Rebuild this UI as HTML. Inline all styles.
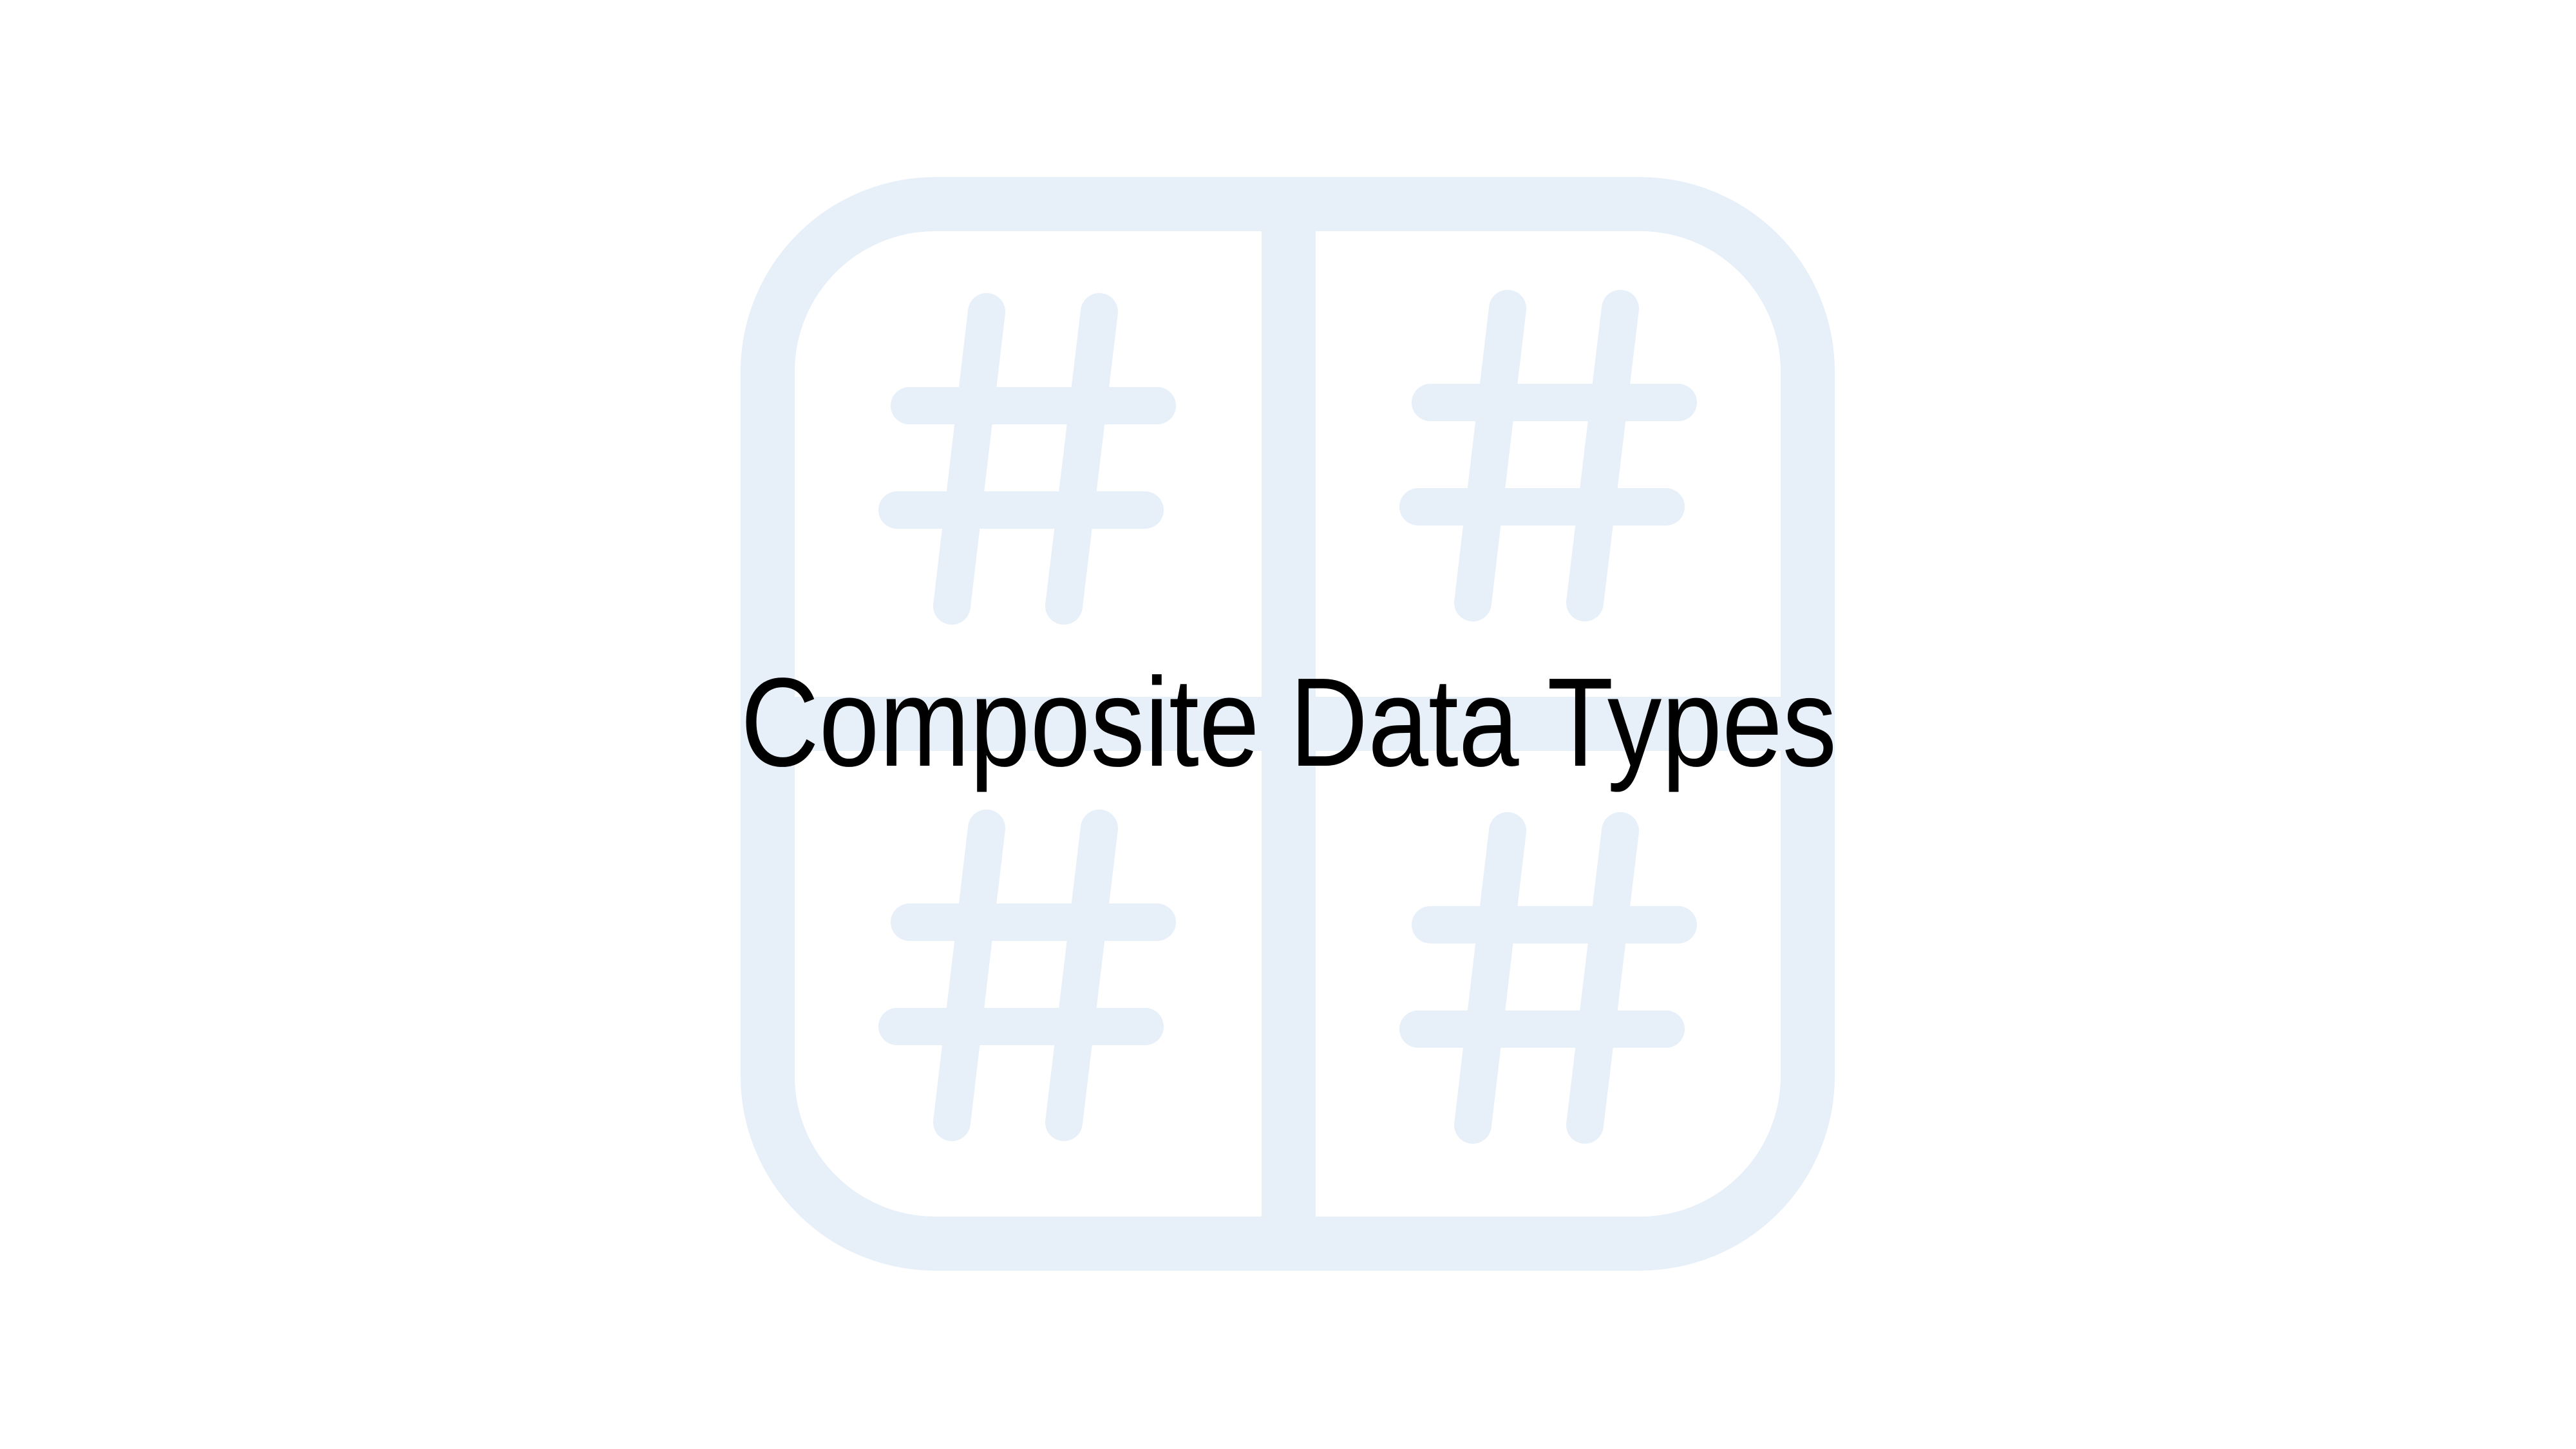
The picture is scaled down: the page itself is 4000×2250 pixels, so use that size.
<!DOCTYPE html>
<html><head><meta charset="utf-8"><style>
html,body{margin:0;padding:0;background:#fff;width:4000px;height:2250px;overflow:hidden}
svg{display:block}
</style></head><body>
<svg width="4000" height="2250" viewBox="0 0 4000 2250" xmlns="http://www.w3.org/2000/svg">
<defs>
<g id="h" fill="none" stroke="#E7EFF9" stroke-width="58" stroke-linecap="round">
<line x1="1532" y1="484" x2="1478" y2="941"/>
<line x1="1707" y1="484" x2="1652" y2="941"/>
<line x1="1412" y1="630" x2="1797" y2="630"/>
<line x1="1393" y1="792" x2="1778" y2="792"/>
</g>
</defs>
<g fill="none" stroke="#E7EFF9" stroke-width="84">
<rect x="1192" y="317" width="1615" height="1614" rx="260" ry="260"/>
<line x1="2001" y1="320" x2="2001" y2="1930"/>
<line x1="1192" y1="1124" x2="2807" y2="1124"/>
</g>
<use href="#h"/>
<use href="#h" transform="translate(809,-5)"/>
<use href="#h" transform="translate(0,802)"/>
<use href="#h" transform="translate(809,806)"/>
<text x="1150" y="1189" font-family="Liberation Sans, sans-serif" font-size="196" fill="#000" textLength="1702" lengthAdjust="spacingAndGlyphs">Composite Data Types</text>
</svg>
</body></html>
